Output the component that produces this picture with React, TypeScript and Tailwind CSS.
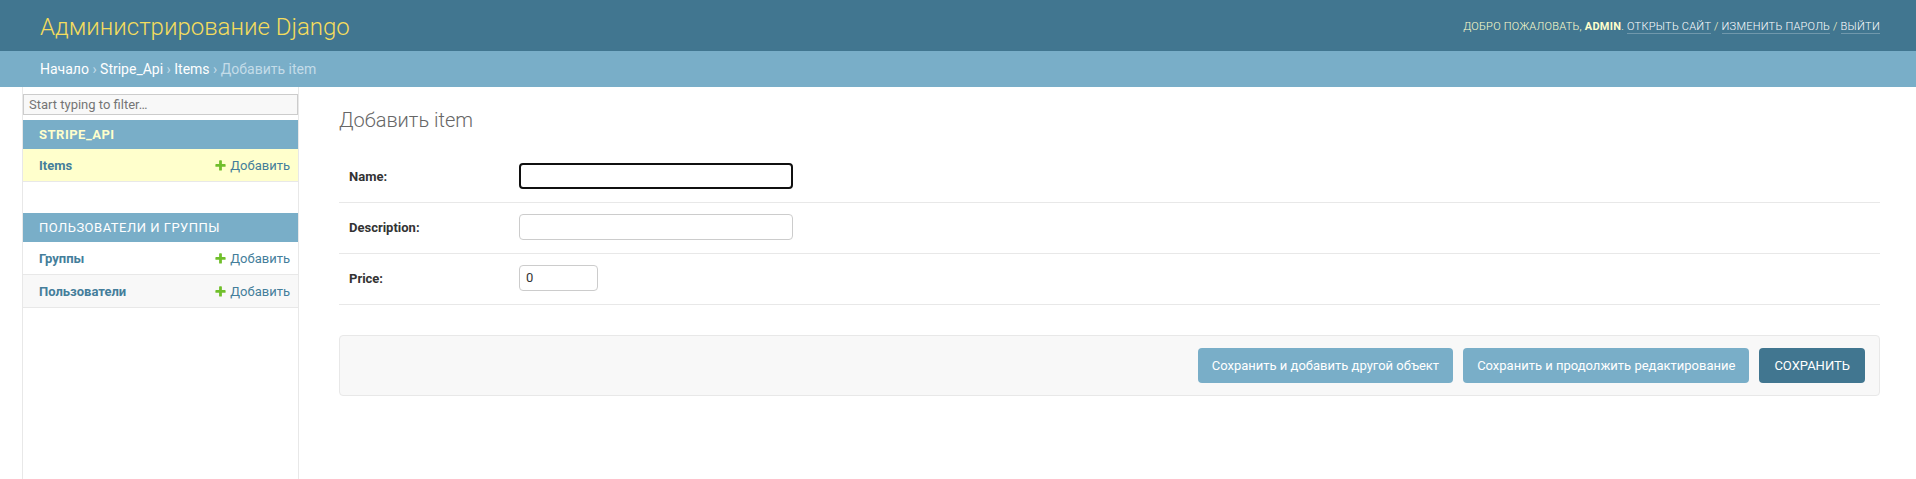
import React from "react";

function AddIcon() {
  return (
    <svg width="13" height="13" viewBox="0 0 1792 1792" className="shrink-0">
      <path
        fill="#70bf2b"
        d="M1600 796v192q0 40-28 68t-68 28h-416v416q0 40-28 68t-68 28h-192q-40 0-68-28t-28-68v-416h-416q-40 0-68-28t-28-68v-192q0-40 28-68t68-28h416v-416q0-40 28-68t68-28h192q40 0 68 28t28 68v416h416q40 0 68 28t28 68z"
      />
    </svg>
  );
}

function ModelRow({ name, rowClass }: { name: string; rowClass: string }) {
  return (
    <div
      className={
        "flex h-[33px] items-center justify-between border-b border-[#e8e8e8] pl-[16px] pr-[8px] pt-[1px] " +
        rowClass
      }
    >
      <a className="text-[13px] font-bold text-[#447e9b]">{name}</a>
      <a className="flex items-center gap-[3px] text-[13px] text-[#447e9b]">
        <AddIcon />
        Добавить
      </a>
    </div>
  );
}

function FormRow({ label, children }: { label: string; children: React.ReactNode }) {
  return (
    <div className="flex h-[51px] items-start border-b border-[#e8e8e8] px-[10px] pt-[11px]">
      <label className="w-[170px] shrink-0 pt-[1px] text-[13px] font-bold leading-[26px] text-[#333]">
        {label}
      </label>
      {children}
    </div>
  );
}

export default function App() {
  return (
    <div className="flex min-h-screen flex-col bg-white font-[Roboto,sans-serif] text-[#333]">
      <header className="flex h-[51px] items-center justify-between bg-[#417690] pl-[40px] pr-[36px] pt-[3px]">
        <h1 className="text-[24px] font-light leading-none text-[#f5dd5d]">Администрирование Django</h1>
        <div className="text-[11px] font-light uppercase tracking-[0.25px] text-[#ffc]">
          Добро пожаловать, <strong className="font-bold">admin</strong>.{" "}
          <a className="border-b border-white/25 text-white">Открыть сайт</a> /{" "}
          <a className="border-b border-white/25 text-white">Изменить пароль</a> /{" "}
          <a className="border-b border-white/25 text-white">Выйти</a>
        </div>
      </header>

      <nav className="flex h-[36px] items-center bg-[#79aec8] px-[40px] text-[14px] text-[#c4dce8]">
        <a className="text-white">Начало</a>
        <span>&nbsp;›&nbsp;</span>
        <a className="text-white">Stripe_Api</a>
        <span>&nbsp;›&nbsp;</span>
        <a className="text-white">Items</a>
        <span>&nbsp;›&nbsp;</span>
        <span>Добавить item</span>
      </nav>

      <div className="flex flex-1">
        <div className="w-[23px] shrink-0 border-r border-[#e8e8e8]" />

        <aside className="w-[276px] shrink-0 border-r border-[#e8e8e8]">
          <div className="mb-[5px] mt-[7px] flex h-[21px] items-center border border-[#ccc] bg-[#f8f8f8] px-[5px] text-[13px] text-[#757575]">
            Start typing to filter…
          </div>

          <div className="mb-[31px]">
            <div className="flex h-[29px] items-center bg-[#79aec8] pl-[16px] text-[13px] font-bold uppercase tracking-[0.5px] text-[#ffc]">
              Stripe_Api
            </div>
            <ModelRow name="Items" rowClass="bg-[#ffc]" />
          </div>

          <div>
            <div className="flex h-[29px] items-center bg-[#79aec8] pl-[16px] text-[13px] uppercase tracking-[0.5px] text-white">
              Пользователи и группы
            </div>
            <ModelRow name="Группы" rowClass="bg-white" />
            <ModelRow name="Пользователи" rowClass="bg-[#f8f8f8]" />
          </div>
        </aside>

        <main className="min-w-0 flex-1 pl-[40px] pr-[36px] pt-[22px]">
          <h1 className="mb-[20px] text-[20px] font-light leading-[23px] text-[#666]">Добавить item</h1>

          <div>
            <FormRow label="Name:">
              <div className="h-[26px] w-[274px] rounded-[4px] border-2 border-[#101010] bg-white" />
            </FormRow>
            <FormRow label="Description:">
              <div className="h-[26px] w-[274px] rounded-[4px] border border-[#ccc] bg-white" />
            </FormRow>
            <FormRow label="Price:">
              <div className="flex h-[26px] w-[79px] items-center rounded-[4px] border border-[#ccc] bg-white px-[6px] text-[13px] text-[#333]">
                0
              </div>
            </FormRow>
          </div>

          <div className="mt-[30px] flex justify-end gap-[10px] rounded-[4px] border border-[#e8e8e8] bg-[#f8f8f8] px-[14px] py-[12px]">
            <button className="h-[35px] rounded-[4px] bg-[#79aec8] px-[14px] text-[13px] text-white">
              Сохранить и добавить другой объект
            </button>
            <button className="h-[35px] rounded-[4px] bg-[#79aec8] px-[14px] text-[13px] text-white">
              Сохранить и продолжить редактирование
            </button>
            <button className="h-[35px] rounded-[4px] bg-[#417690] px-[15px] text-[13px] uppercase text-white">
              Сохранить
            </button>
          </div>
        </main>
      </div>
    </div>
  );
}
